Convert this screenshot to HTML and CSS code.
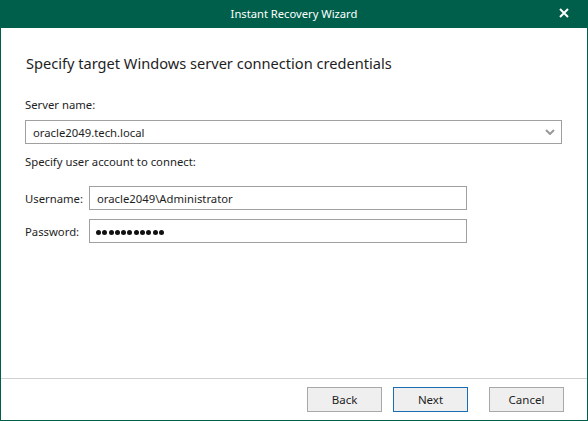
FILE: index.html
```html
<!DOCTYPE html>
<html>
<head>
<meta charset="utf-8">
<link rel="stylesheet" href="styles.css">
</head>
<body>
<div class="window">
  <div class="titlebar">
    <span class="title">Instant Recovery Wizard</span>
    <svg class="close" width="10" height="10" viewBox="0 0 10 10"><path d="M1 1 L9 9 M9 1 L1 9" stroke="#fff" stroke-width="2" fill="none"/></svg>
  </div>
  <div class="body">
    <div class="content">
      <h1 class="heading">Specify target Windows server connection credentials</h1>
      <div class="label">Server name:</div>
      <div class="combo">
        <span class="value">oracle2049.tech.local</span>
        <svg class="chev" width="10" height="6" viewBox="0 0 10 6"><path d="M1 1 L5 5 L9 1" stroke="#999" stroke-width="2" fill="none"/></svg>
      </div>
      <div class="label sub">Specify user account to connect:</div>
      <div class="creds">
        <div class="row">
          <span class="rlabel">Username:</span>
          <div class="field">oracle2049\Administrator</div>
        </div>
        <div class="row">
          <span class="rlabel">Password:</span>
          <div class="field pw"><span class="dot"></span><span class="dot"></span><span class="dot"></span><span class="dot"></span><span class="dot"></span><span class="dot"></span><span class="dot"></span><span class="dot"></span><span class="dot"></span><span class="dot"></span><span class="dot"></span></div>
        </div>
      </div>
    </div>
    <div class="footer">
      <button class="btn">Back</button>
      <button class="btn default">Next</button>
      <button class="btn cancel">Cancel</button>
    </div>
  </div>
</div>
</body>
</html>
```
FILE: styles.css
```css
html, body { margin: 0; padding: 0; background: #fff; }
body { font-family: "Noto Sans", "Liberation Sans", sans-serif; font-size: 11.3px; color: #1e1e1e; }
.window { width: 588px; height: 421px; display: flex; flex-direction: column; box-sizing: border-box; }
.titlebar { height: 28px; background: #005f4b; color: #fff; display: flex; align-items: center; justify-content: center; position: relative; flex: none; }
.title { font-size: 11.2px; margin-left: 0; position: relative; top: -1px; }
.close { position: absolute; left: 559px; top: 8px; }
.body { flex: 1; display: flex; flex-direction: column; border: 1px solid #005f4b; border-top: none; }
.content { flex: 1; padding: 0 25px 0 24px; }
.heading { font-size: 14.6px; font-weight: normal; margin: 25px 0 0 1px; line-height: 20px; color: #1e1e1e; }
.label { line-height: 16px; margin-top: 24px; }
.label.sub { margin-top: 10px; }
.combo { margin-top: 7px; height: 24px; box-sizing: border-box; border: 1px solid #a0a0a0; display: flex; align-items: center; justify-content: space-between; padding: 0 6px 0 7px; }
.creds { margin-top: 16px; display: flex; flex-direction: column; gap: 9px; }
.row { display: flex; align-items: center; }
.rlabel { width: 64px; flex: none; }
.field { width: 378px; height: 24px; box-sizing: border-box; border: 1px solid #a0a0a0; padding: 0 7px; display: flex; align-items: center; }
.field.pw { padding-left: 6px; padding-top: 2px; gap: 1.3px; }
.dot { width: 5px; height: 5px; border-radius: 50%; background: #111; flex: none; }
.footer { flex: none; border-top: 1px solid #d0d0d0; padding: 8px 23px 8px 0; display: flex; justify-content: flex-end; }
.btn { width: 75px; height: 25px; box-sizing: border-box; background: #efefef; border: 1px solid #a8a8a8; font-family: inherit; font-size: 11.5px; color: #1e1e1e; padding: 0; margin: 0 0 0 11px; }
.btn.default { border-color: #1a6db3; }
.btn.cancel { margin-left: 21px; }
```
